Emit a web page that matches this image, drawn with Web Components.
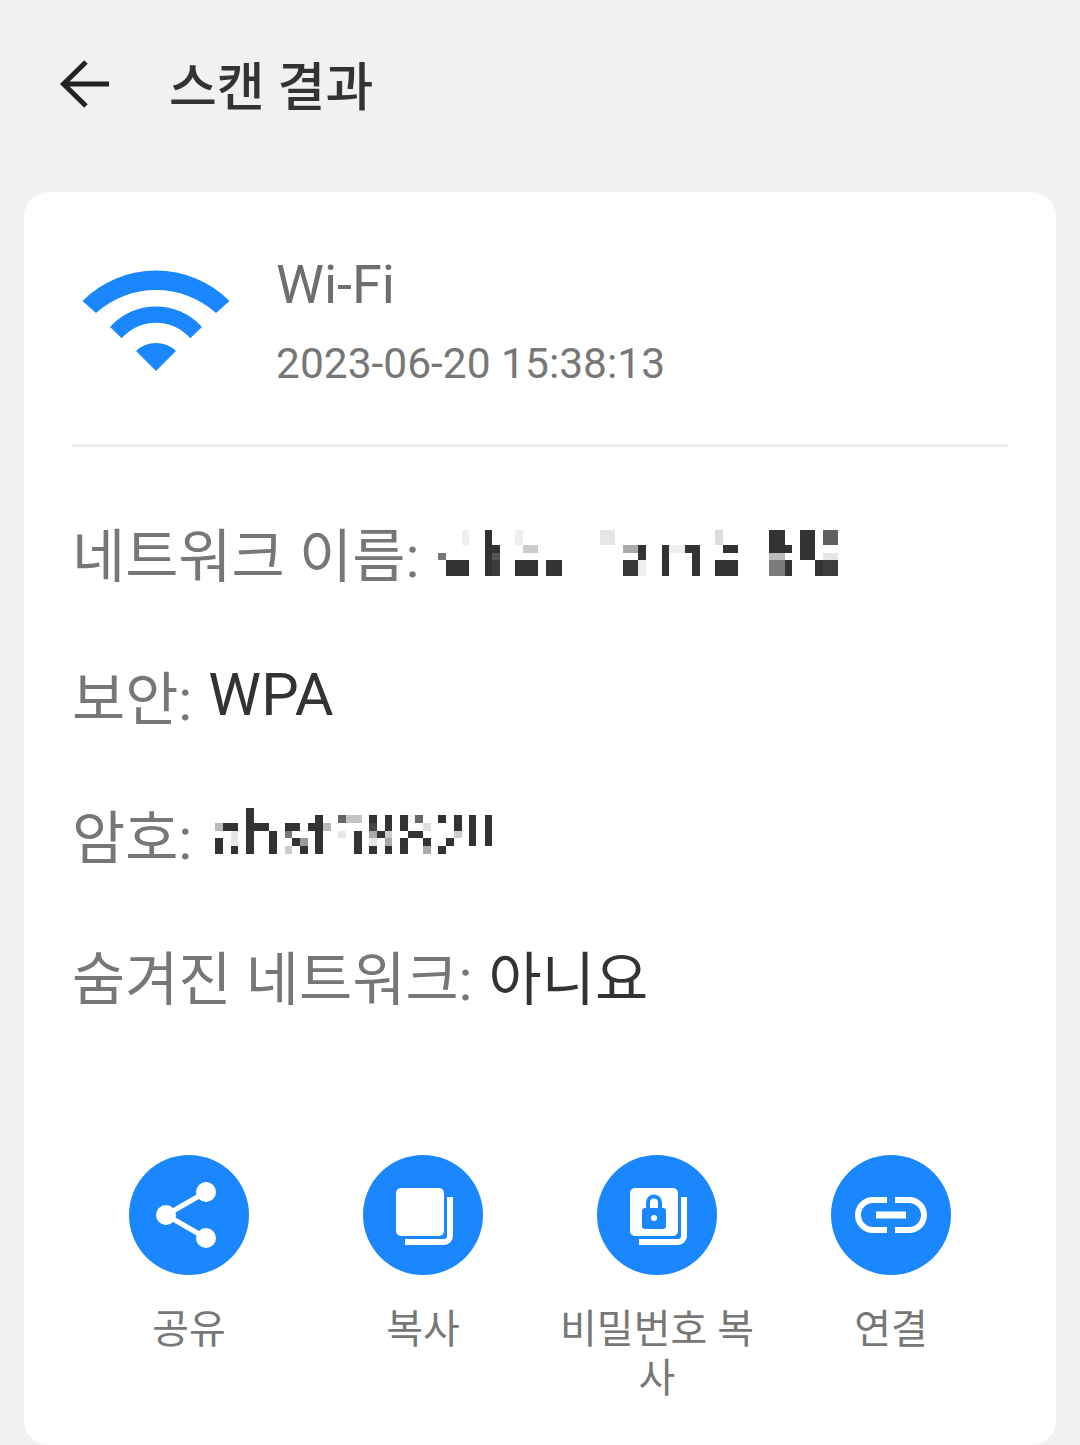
<!DOCTYPE html>
<html lang="ko">
  <head>
    <meta charset="UTF-8" />
    <title>스캔 결과</title>
    <style>
      html,
      body {
        margin: 0;
        height: 1445px;
        overflow: hidden;
        background: #f1f1f3;
      }
      body {
        font-family: Roboto, "Noto Sans CJK KR", sans-serif;
      }
      .big {
        font-size: 59.5px;
      }
    </style>
  </head>
  <body>
    <scan-header>스캔 결과</scan-header>

    <result-card>
      <wifi-summary slot="top" date="2023-06-20 15:38:13">Wi-Fi</wifi-summary>

      <info-row label="네트워크 이름:">
        <pixel-block kind="name"></pixel-block>
      </info-row>
      <info-row label="보안:" low><span class="big">WPA</span></info-row>
      <info-row label="암호:">
        <pixel-block kind="pass"></pixel-block>
      </info-row>
      <info-row label="숨겨진 네트워크:">아니요</info-row>

      <action-button slot="actions" icon="share">공유</action-button>
      <action-button slot="actions" icon="copy">복사</action-button>
      <action-button slot="actions" icon="lock">비밀번호 복사</action-button>
      <action-button slot="actions" icon="link">연결</action-button>
    </result-card>

    <script>
      customElements.define(
        "scan-header",
        class extends HTMLElement {
          constructor() {
            super();
            const shadow = this.attachShadow({ mode: "open" });
            shadow.innerHTML = `
    <style>
      :host {
        display: flex;
        align-items: center;
        box-sizing: border-box;
        height: 192px;
        padding: 0 0 24px 57px;
      }
      svg { flex: none; display: block; }
      h1 {
        margin: 10px 0 0 56px;
        font: 500 52px/1.2 Roboto, "Noto Sans CJK KR", sans-serif;
        color: #333;
      }
    </style>
    <svg width="56" height="56" viewBox="0 0 56 56" fill="none" stroke="#222" stroke-width="5">
      <path d="M52 28H6M29 6 6.5 28 29 50" />
    </svg>
    <h1><slot></slot></h1>
    `;
          }
        }
      );

      customElements.define(
        "result-card",
        class extends HTMLElement {
          constructor() {
            super();
            const shadow = this.attachShadow({ mode: "open" });
            shadow.innerHTML = `
    <style>
      :host {
        display: block;
        box-sizing: border-box;
        height: 1253px;
        margin: 0 24px;
        padding: 0 48px;
        background: #fff;
        border-radius: 24px;
      }
      .rows {
        display: flex;
        flex-direction: column;
        padding-top: 34px;
      }
      .actions {
        display: grid;
        grid-template-columns: repeat(4, 234px);
        margin-top: 110px;
      }
    </style>
    <slot name="top"></slot>
    <div class="rows"><slot></slot></div>
    <div class="actions"><slot name="actions"></slot></div>
    `;
          }
        }
      );

      customElements.define(
        "wifi-summary",
        class extends HTMLElement {
          constructor() {
            super();
            const shadow = this.attachShadow({ mode: "open" });
            shadow.innerHTML = `
    <style>
      :host {
        display: flex;
        box-sizing: border-box;
        height: 255px;
        border-bottom: 3px solid #eeeeee;
        padding: 58px 0 0 9px;
      }
      svg { flex: none; display: block; margin-top: 19.500px; }
      .text { margin-left: 45px; font-family: Roboto, sans-serif; }
      .title { font-size: 54px; line-height: 70px; color: #6e6e6e; }
      .date { font-size: 42.500px; line-height: 48px; margin-top: 20px; color: #777; }
    </style>
    <svg width="150" height="102" viewBox="-75 -101 150 102" fill="#1a87ff">
      <path d="M-73.500-70A103.800 103.800 0 0 1 73.500-70L60-58A89.700 89.700 0 0 0-60-58Z" />
      <path d="M-46-44A61.900 61.900 0 0 1 46-44L34.300-32.700A45.500 45.500 0 0 0-34.300-32.700Z" />
      <path d="M-20-20A29 29 0 0 1 20-20L0 0Z" />
    </svg>
    <div class="text">
      <div class="title"><slot></slot></div>
      <div class="date"></div>
    </div>
    `;
            shadow.querySelector(".date").textContent = this.getAttribute("date");
          }
        }
      );

      customElements.define(
        "info-row",
        class extends HTMLElement {
          constructor() {
            super();
            const shadow = this.attachShadow({ mode: "open" });
            shadow.innerHTML = `
    <style>
      :host {
        display: flex;
        align-items: center;
        box-sizing: border-box;
        height: 141px;
        font-size: 57.800px;
        color: #333;
        white-space: nowrap;
      }
      :host([low]) { padding-top: 5px; }
      .label { color: #777; margin-right: 16px; }
    </style>
    <span class="label"></span><slot></slot>
    `;
            shadow.querySelector(".label").textContent = this.getAttribute("label");
          }
        }
      );

      // 가려진 글자 (모자이크) : [x, y, w, h, color]
      const mosaics = {
        name: {
          w: 420,
          h: 75,
          shift: "margin: 2px 0 0 -5px;",
          rects: [
            [96, 45, 21, 45, "#eee"], [24, 114, 24, 21, "#777"], [48, 135, 69, 48, "#333"],
            [165, 45, 21, 138, "#333"], [186, 90, 24, 24, "#333"], [186, 114, 24, 21, "#555"], [186, 135, 24, 48, "#3c3c3c"],
            [255, 45, 24, 45, "#eee"], [279, 90, 45, 24, "#ccc"], [255, 135, 69, 48, "#333"], [348, 135, 48, 48, "#333"],
            [510, 45, 45, 45, "#e6e6e6"], [579, 90, 45, 24, "#aaa"], [624, 90, 24, 45, "#333"], [579, 135, 45, 48, "#383838"], [624, 135, 24, 48, "#eee"],
            [696, 90, 21, 93, "#333"], [717, 90, 48, 24, "#eee"], [765, 90, 45, 24, "#333"], [786, 114, 24, 69, "#333"],
            [855, 45, 24, 45, "#ddd"], [879, 90, 45, 24, "#333"], [855, 135, 69, 48, "#333"],
            [1017, 45, 48, 45, "#333"], [1017, 90, 69, 24, "#333"], [1017, 114, 48, 21, "#bbb"], [1017, 135, 48, 48, "#7b7b7b"], [1065, 135, 21, 48, "#333"],
            [1110, 45, 45, 90, "#333"], [1179, 45, 45, 45, "#606060"], [1179, 114, 45, 21, "#e6e6e6"], [1155, 135, 24, 48, "#333"], [1179, 135, 45, 48, "#3c3c3c"],
          ],
        },
        pass: {
          w: 300,
          h: 65,
          shift: "margin-left: -3.500px;",
          rects: [
            [30, 66, 24, 24, "#bbb"], [54, 66, 45, 24, "#333"], [30, 111, 24, 48, "#333"], [78, 90, 21, 45, "#e6e6e6"], [78, 135, 21, 24, "#333"],
            [123, 21, 24, 138, "#333"], [147, 66, 45, 24, "#333"], [192, 90, 24, 69, "#333"],
            [240, 66, 45, 24, "#333"], [240, 90, 21, 21, "#777"], [261, 111, 24, 24, "#333"], [285, 111, 24, 24, "#999"], [240, 135, 21, 24, "#ccc"], [285, 135, 24, 24, "#333"],
            [309, 66, 45, 24, "#333"], [330, 42, 24, 117, "#333"], [354, 66, 24, 24, "#bbb"],
            [399, 42, 24, 24, "#666"], [423, 42, 48, 24, "#c4c4c4"], [399, 90, 24, 21, "#e6e6e6"], [447, 90, 24, 69, "#333"],
            [492, 42, 24, 24, "#333"], [492, 66, 24, 24, "#444"], [492, 90, 24, 21, "#aaa"], [516, 90, 24, 21, "#333"], [540, 42, 21, 48, "#333"], [540, 90, 21, 21, "#ccc"], [492, 111, 24, 24, "#e6e6e6"], [540, 111, 21, 24, "#aaa"], [492, 135, 24, 24, "#333"], [540, 135, 21, 24, "#333"],
            [585, 42, 24, 48, "#333"], [609, 42, 21, 24, "#f5f5f5"], [630, 42, 24, 24, "#666"], [654, 66, 24, 24, "#e0e0e0"], [609, 90, 45, 21, "#333"], [585, 111, 24, 48, "#333"], [654, 111, 24, 24, "#333"], [654, 135, 24, 24, "#aaa"],
            [699, 42, 24, 24, "#333"], [747, 42, 24, 48, "#333"], [747, 90, 24, 21, "#ccc"], [723, 111, 24, 24, "#333"], [699, 135, 24, 24, "#333"],
            [792, 42, 21, 93, "#333"], [840, 42, 21, 93, "#333"],
          ],
        },
      };

      customElements.define(
        "pixel-block",
        class extends HTMLElement {
          constructor() {
            super();
            const shadow = this.attachShadow({ mode: "open" });
            const m = mosaics[this.getAttribute("kind")];
            const rects = m.rects
              .map((r) => `<rect x="${r[0]}" y="${r[1]}" width="${r[2]}" height="${r[3]}" fill="${r[4]}" />`)
              .join("");
            shadow.innerHTML = `
    <style>
      :host { display: block; flex: none; ${m.shift} }
      svg { display: block; }
    </style>
    <svg width="${m.w}" height="${m.h}" viewBox="0 0 ${m.w * 3} ${m.h * 3}" shape-rendering="crispEdges">${rects}</svg>
    `;
          }
        }
      );

      const backSheet = `
      <rect x="33" y="33" width="48" height="48" rx="5" fill="#fff" />
      <path d="M42 87H81a6 6 0 0 0 6-6V42" fill="none" stroke="#fff" stroke-width="6" />`;

      const icons = {
        share: `
      <path d="M77 37 37 60 77 83" fill="none" stroke="#fff" stroke-width="5" />
      <circle cx="77" cy="37" r="10" fill="#fff" />
      <circle cx="37" cy="60" r="10" fill="#fff" />
      <circle cx="77" cy="83" r="10" fill="#fff" />`,
        copy: backSheet,
        lock:
          backSheet +
          `
      <rect x="45" y="53" width="24" height="21" rx="3" fill="#1a87ff" />
      <path d="M51 54V47.500a6 6 0 0 1 12 0V54" fill="none" stroke="#1a87ff" stroke-width="4" />
      <circle cx="57" cy="63" r="3" fill="#fff" />`,
        link: `
      <path d="M56 45H42a15 15 0 0 0 0 30H56M64 45H78a15 15 0 0 1 0 30H64" fill="none" stroke="#fff" stroke-width="6" />
      <rect x="45" y="56.500" width="30" height="7" fill="#fff" />`,
      };

      customElements.define(
        "action-button",
        class extends HTMLElement {
          constructor() {
            super();
            const shadow = this.attachShadow({ mode: "open" });
            shadow.innerHTML = `
    <style>
      :host {
        display: flex;
        flex-direction: column;
        align-items: center;
        box-sizing: border-box;
        padding: 0 12px;
        font-size: 40px;
        line-height: 49px;
        color: #777;
        text-align: center;
        word-break: break-all;
      }
      svg { display: block; flex: none; margin-bottom: 30px; }
    </style>
    <svg width="120" height="120" viewBox="0 0 120 120">
      <circle cx="60" cy="60" r="60" fill="#1a87ff" />
      ${icons[this.getAttribute("icon")]}
    </svg>
    <slot></slot>
    `;
          }
        }
      );
    </script>
  </body>
</html>
